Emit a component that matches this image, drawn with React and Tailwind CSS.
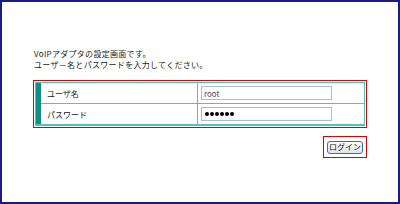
export default function App() {
  const font = { fontFamily: '"Noto Sans CJK JP", "Liberation Sans", sans-serif' };
  return (
    <div
      className="w-[400px] h-[204px] border-2 border-[#1a1a8c] bg-white text-[#222] text-[8px] leading-[11px]"
      style={font}
    >
      <div className="pt-[46px] pl-[32px] tracking-[0.3px]">
        <p>VoIPアダプタの設定画面です。</p>
        <p>ユーザ－名とパスワードを入力してください。</p>
      </div>

      <div className="ml-[31px] mt-[10px] w-[334px] border border-[#e00000] p-px">
        <div className="flex border border-b-2 border-[#4cc4c4]">
          <div className="w-[5px] bg-[#0e9085]" />
          <div className="flex-1">
            <div className="flex h-[21px] border-b border-[#4cc4c4]">
              <div className="w-[157px] border-r border-[#4cc4c4] pl-[6px] flex items-center">ユーザ名</div>
              <div className="flex-1 pl-[3px] flex items-center">
                <div className="w-[131px] h-[14px] border border-[#a8bcd4] pl-[2px] flex items-center text-[#5a3570]">root</div>
              </div>
            </div>
            <div className="flex h-[20px]">
              <div className="w-[157px] border-r border-[#4cc4c4] pl-[6px] flex items-center">パスワード</div>
              <div className="flex-1 pl-[3px] flex items-center">
                <div className="w-[131px] h-[14px] border border-[#a8bcd4] pl-[3px] flex items-center gap-[1px]">
                  {[0, 1, 2, 3, 4, 5].map((i) => (
                    <span key={i} className="w-[4px] h-[4px] rounded-full bg-black" />
                  ))}
                </div>
              </div>
            </div>
          </div>
        </div>
      </div>

      <div className="flex justify-end w-[365px] mt-[8px]">
        <div className="border border-[#e00000] w-[44px] h-[22px] flex items-center justify-center">
          <button className="w-[36px] h-[13px] rounded-[3px] border border-[#3a6cc6] bg-gradient-to-b from-white to-[#dfe3ee] text-[8px] leading-none text-[#111] flex items-center justify-center">
            ログイン
          </button>
        </div>
      </div>
    </div>
  );
}
